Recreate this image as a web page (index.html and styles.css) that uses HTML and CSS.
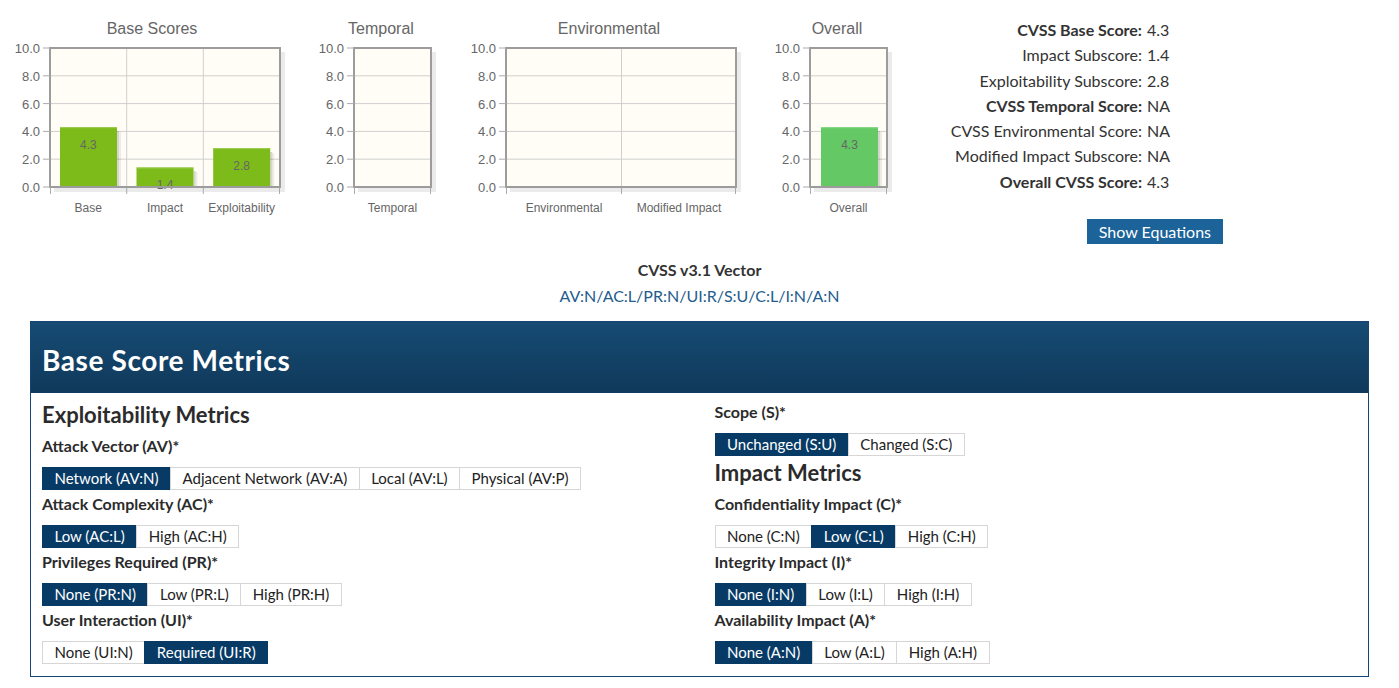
FILE: index.html
```html
<!DOCTYPE html>
<html lang="en">
<head>
<meta charset="utf-8">
<title>CVSS v3.1 Calculator</title>
<link rel="stylesheet" href="styles.css">
</head>
<body>
<div class="page">
  <section class="top">
    <div class="charts">
      <svg class="chart" width="290" height="225" viewBox="0 0 290 225">
        <text class="c-title" x="152" y="34">Base Scores</text>
        <rect class="plot-bg" x="50" y="48" width="230" height="139"/>
        <path class="grid" d="M50 75.8H280M50 103.6H280M50 131.4H280M50 159.2H280M126.7 48V187M203.3 48V187"/>
        <path class="plot-shadow" d="M283 52V190H54"/>
        <rect class="bar-shadow" x="117" y="131" width="2" height="56"/>
        <rect class="bar-shadow2" x="119" y="132" width="2" height="55"/>
        <rect class="bar-base" x="60" y="127.2" width="57" height="59.8"/>
        <rect class="bar-hi" x="60" y="127.2" width="57" height="1"/>
        <rect class="bar-shadow" x="193.5" y="171" width="2" height="16"/>
        <rect class="bar-shadow2" x="195.5" y="172" width="2" height="15"/>
        <rect class="bar-base" x="136.5" y="167.5" width="57" height="19.5"/>
        <rect class="bar-hi" x="136.5" y="167.5" width="57" height="1"/>
        <rect class="bar-shadow" x="270.2" y="152" width="2" height="35"/>
        <rect class="bar-shadow2" x="272.2" y="153" width="2" height="34"/>
        <rect class="bar-base" x="213.2" y="148.1" width="57" height="38.9"/>
        <rect class="bar-hi" x="213.2" y="148.1" width="57" height="1"/>
        <text class="c-val" x="88.3" y="148.5">4.3</text>
        <text class="c-val" x="165" y="188.5">1.4</text>
        <text class="c-val" x="241.7" y="169.5">2.8</text>
        <rect class="plot-border" x="50" y="48" width="230" height="139"/>
        <path class="ticks" d="M43 48H50M43 75.8H50M43 103.6H50M43 131.4H50M43 159.2H50M43 187H50M50.5 188V194M126.7 188V194M203.3 188V194M279.5 188V194"/>
        <text class="c-tick" x="40" y="53">10.0</text>
        <text class="c-tick" x="40" y="80.8">8.0</text>
        <text class="c-tick" x="40" y="108.6">6.0</text>
        <text class="c-tick" x="40" y="136.4">4.0</text>
        <text class="c-tick" x="40" y="164.2">2.0</text>
        <text class="c-tick" x="40" y="192">0.0</text>
        <text class="c-cat" x="88.3" y="212">Base</text>
        <text class="c-cat" x="165" y="212">Impact</text>
        <text class="c-cat" x="241.7" y="212">Exploitability</text>
      </svg>

      <svg class="chart" width="138" height="225" viewBox="0 0 138 225">
        <text class="c-title" x="77" y="34">Temporal</text>
        <rect class="plot-bg" x="50" y="48" width="77" height="139"/>
        <path class="grid" d="M50 75.8H127M50 103.6H127M50 131.4H127M50 159.2H127"/>
        <path class="plot-shadow" d="M130 52V190H54"/>
        <rect class="plot-border" x="50" y="48" width="77" height="139"/>
        <path class="ticks" d="M43 48H50M43 75.8H50M43 103.6H50M43 131.4H50M43 159.2H50M43 187H50M50.5 188V194M126.5 188V194"/>
        <text class="c-tick" x="40" y="53">10.0</text>
        <text class="c-tick" x="40" y="80.8">8.0</text>
        <text class="c-tick" x="40" y="108.6">6.0</text>
        <text class="c-tick" x="40" y="136.4">4.0</text>
        <text class="c-tick" x="40" y="164.2">2.0</text>
        <text class="c-tick" x="40" y="192">0.0</text>
        <text class="c-cat" x="88.5" y="212">Temporal</text>
      </svg>

      <svg class="chart" width="290" height="225" viewBox="0 0 290 225">
        <text class="c-title" x="153" y="34">Environmental</text>
        <rect class="plot-bg" x="50" y="48" width="230" height="139"/>
        <path class="grid" d="M50 75.8H280M50 103.6H280M50 131.4H280M50 159.2H280M165.5 48V187"/>
        <path class="plot-shadow" d="M283 52V190H54"/>
        <rect class="plot-border" x="50" y="48" width="230" height="139"/>
        <path class="ticks" d="M43 48H50M43 75.8H50M43 103.6H50M43 131.4H50M43 159.2H50M43 187H50M50.5 188V194M165.5 188V194M279.5 188V194"/>
        <text class="c-tick" x="40" y="53">10.0</text>
        <text class="c-tick" x="40" y="80.8">8.0</text>
        <text class="c-tick" x="40" y="108.6">6.0</text>
        <text class="c-tick" x="40" y="136.4">4.0</text>
        <text class="c-tick" x="40" y="164.2">2.0</text>
        <text class="c-tick" x="40" y="192">0.0</text>
        <text class="c-cat" x="108" y="212">Environmental</text>
        <text class="c-cat" x="223" y="212">Modified Impact</text>
      </svg>

      <svg class="chart" width="137" height="225" viewBox="0 0 137 225">
        <text class="c-title" x="77" y="34">Overall</text>
        <rect class="plot-bg" x="50" y="48" width="77" height="139"/>
        <path class="grid" d="M50 75.8H127M50 103.6H127M50 131.4H127M50 159.2H127"/>
        <path class="plot-shadow" d="M130 52V190H54"/>
        <rect class="bar-shadow" x="118" y="131" width="2" height="56"/>
        <rect class="bar-shadow2" x="120" y="132" width="2" height="55"/>
        <rect class="bar-overall" x="61" y="127.2" width="57" height="59.8"/>
        <rect class="bar-hi2" x="61" y="127.2" width="57" height="1"/>
        <text class="c-val" x="89.5" y="148.5">4.3</text>
        <rect class="plot-border" x="50" y="48" width="77" height="139"/>
        <path class="ticks" d="M43 48H50M43 75.8H50M43 103.6H50M43 131.4H50M43 159.2H50M43 187H50M50.5 188V194M126.5 188V194"/>
        <text class="c-tick" x="40" y="53">10.0</text>
        <text class="c-tick" x="40" y="80.8">8.0</text>
        <text class="c-tick" x="40" y="108.6">6.0</text>
        <text class="c-tick" x="40" y="136.4">4.0</text>
        <text class="c-tick" x="40" y="164.2">2.0</text>
        <text class="c-tick" x="40" y="192">0.0</text>
        <text class="c-cat" x="88.5" y="212">Overall</text>
      </svg>
    </div>

    <div class="scores">
      <dl class="score-list">
        <dt class="strong">CVSS Base Score:</dt><dd>4.3</dd>
        <dt>Impact Subscore:</dt><dd>1.4</dd>
        <dt>Exploitability Subscore:</dt><dd>2.8</dd>
        <dt class="strong">CVSS Temporal Score:</dt><dd>NA</dd>
        <dt>CVSS Environmental Score:</dt><dd>NA</dd>
        <dt>Modified Impact Subscore:</dt><dd>NA</dd>
        <dt class="strong">Overall CVSS Score:</dt><dd>4.3</dd>
      </dl>
      <button class="eq-btn" type="button">Show Equations</button>
    </div>
  </section>

  <section class="vector">
    <div class="vector-title">CVSS v3.1 Vector</div>
    <a class="vector-str" href="#">AV:N/AC:L/PR:N/UI:R/S:U/C:L/I:N/A:N</a>
  </section>

  <section class="panel">
    <header class="panel-head">
      <h2>Base Score Metrics</h2>
    </header>
    <div class="panel-body">
      <div class="col">
        <h3>Exploitability Metrics</h3>
        <div class="metric">
          <h4>Attack Vector (AV)*</h4>
          <div class="btn-group">
            <span class="opt on">Network (AV:N)</span><span class="opt">Adjacent Network (AV:A)</span><span class="opt">Local (AV:L)</span><span class="opt">Physical (AV:P)</span>
          </div>
        </div>
        <div class="metric">
          <h4>Attack Complexity (AC)*</h4>
          <div class="btn-group">
            <span class="opt on">Low (AC:L)</span><span class="opt">High (AC:H)</span>
          </div>
        </div>
        <div class="metric">
          <h4>Privileges Required (PR)*</h4>
          <div class="btn-group">
            <span class="opt on">None (PR:N)</span><span class="opt">Low (PR:L)</span><span class="opt">High (PR:H)</span>
          </div>
        </div>
        <div class="metric">
          <h4>User Interaction (UI)*</h4>
          <div class="btn-group">
            <span class="opt">None (UI:N)</span><span class="opt on">Required (UI:R)</span>
          </div>
        </div>
      </div>
      <div class="col">
        <div class="metric">
          <h4>Scope (S)*</h4>
          <div class="btn-group">
            <span class="opt on">Unchanged (S:U)</span><span class="opt">Changed (S:C)</span>
          </div>
        </div>
        <h3>Impact Metrics</h3>
        <div class="metric">
          <h4>Confidentiality Impact (C)*</h4>
          <div class="btn-group">
            <span class="opt">None (C:N)</span><span class="opt on">Low (C:L)</span><span class="opt">High (C:H)</span>
          </div>
        </div>
        <div class="metric">
          <h4>Integrity Impact (I)*</h4>
          <div class="btn-group">
            <span class="opt on">None (I:N)</span><span class="opt">Low (I:L)</span><span class="opt">High (I:H)</span>
          </div>
        </div>
        <div class="metric">
          <h4>Availability Impact (A)*</h4>
          <div class="btn-group">
            <span class="opt on">None (A:N)</span><span class="opt">Low (A:L)</span><span class="opt">High (A:H)</span>
          </div>
        </div>
      </div>
    </div>
  </section>
</div>
</body>
</html>
```

FILE: styles.css
```css
* { box-sizing: border-box; }

html, body {
  margin: 0;
  padding: 0;
  background: #fff;
}

body {
  font-family: Lato, "Open Sans", sans-serif;
  color: #333;
  font-size: 16px;
}

.page {
  width: 1399px;
}

/* ---------- top: charts + scores ---------- */
.top {
  display: flex;
  align-items: flex-start;
  height: 245px;
}

.charts {
  display: flex;
  gap: 14px;
  flex: none;
}

.chart {
  display: block;
  overflow: visible;
}

.c-title {
  font-family: "Liberation Sans", Arial, sans-serif;
  font-size: 16px;
  fill: #666;
  text-anchor: middle;
}

.c-tick {
  font-family: "Liberation Sans", Arial, sans-serif;
  font-size: 13px;
  fill: #666;
  text-anchor: end;
}

.c-cat,
.c-val {
  font-family: "Liberation Sans", Arial, sans-serif;
  font-size: 12px;
  fill: #666;
  text-anchor: middle;
}

.plot-bg { fill: #fffdf6; }
.grid { fill: none; stroke: #cfcfcf; stroke-width: 1; }
.plot-border { fill: none; stroke: #9c9c9c; stroke-width: 2; }
.plot-shadow { fill: none; stroke: rgba(0, 0, 0, 0.08); stroke-width: 4; }
.ticks { fill: none; stroke: #aaa; stroke-width: 1; }
.bar-base { fill: #7dbb1b; }
.bar-overall { fill: #64c964; }
.bar-hi { fill: #9ccd55; }
.bar-hi2 { fill: #8ad88a; }
.bar-shadow { fill: rgba(0, 0, 0, 0.16); }
.bar-shadow2 { fill: rgba(0, 0, 0, 0.07); }

.scores {
  flex: 1;
  display: flex;
  flex-direction: column;
  align-items: flex-end;
  padding: 17px 176px 0 0;
}

.score-list {
  display: grid;
  grid-template-columns: auto 22px;
  column-gap: 5px;
  margin: 0 54px 0 0;
  line-height: 25.3px;
}

.score-list dt {
  text-align: right;
  margin: 0;
}

.score-list dt.strong {
  font-weight: 700;
}

.score-list dd {
  margin: 0;
  white-space: nowrap;
}

.eq-btn {
  margin-top: 25px;
  height: 25px;
  padding: 0 12px;
  border: 0;
  background: #1b6399;
  color: #fff;
  font-family: inherit;
  font-size: 16px;
  line-height: 25px;
}

/* ---------- vector ---------- */
.vector {
  margin-top: 12px;
  text-align: center;
  line-height: 26px;
}

.vector-title {
  font-weight: 700;
}

.vector-str {
  color: #245c8e;
  text-decoration: none;
}

/* ---------- panel ---------- */
.panel {
  margin: 12px 30px 0;
  border: 1px solid #144673;
}

.panel-head {
  height: 71px;
  padding: 21px 11px 0;
  background: linear-gradient(#164b73, #10395b);
}

.panel-head h2 {
  margin: 0;
  color: #fff;
  font-size: 28px;
  line-height: 34px;
  font-weight: 700;
  letter-spacing: 0.6px;
}

.panel-body {
  display: grid;
  grid-template-columns: 1fr 1fr;
  column-gap: 30px;
  padding: 9px 11px 8px;
}

.col h3 {
  margin: 0 0 8px;
  font-size: 22px;
  line-height: 26px;
  font-weight: 700;
  color: #2b2b2b;
}

.col .metric + h3 {
  margin-top: 1px;
}

.metric h4 {
  margin: 0 0 11px;
  font-size: 16px;
  line-height: 20px;
  font-weight: 700;
  color: #2b2b2b;
}

.btn-group {
  display: flex;
  margin-bottom: 4px;
}

.opt {
  display: block;
  height: 23px;
  padding: 0 11.5px;
  border: 1px solid #d6d6d6;
  margin-left: -1px;
  font-size: 15px;
  line-height: 21px;
  color: #222;
  background: #fff;
  white-space: nowrap;
}

.opt:first-child {
  margin-left: 0;
}

.opt.on {
  background: #073b66;
  border-color: #073b66;
  color: #fff;
}
```
